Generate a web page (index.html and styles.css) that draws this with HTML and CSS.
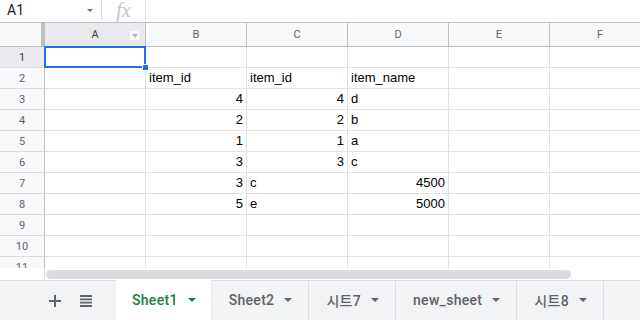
FILE: index.html
```html
<!DOCTYPE html>
<html>
<head>
<meta charset="utf-8">
<link rel="stylesheet" href="styles.css">
</head>
<body>
<div class="app">
  <div class="formula-bar">
    <div class="namebox"><span class="ref">A1</span><span class="caret"></span></div>
    <div class="fx">fx</div>
    <div class="finput"></div>
  </div>
  <div class="sheet">
    <div class="grid">
      <div class="corner"></div>
      <div class="ch sel-h">A<span class="filter"></span></div>
      <div class="ch">B</div><div class="ch">C</div><div class="ch">D</div><div class="ch">E</div><div class="ch">F</div>

      <div class="rh sel-h">1</div><div class="c"></div><div class="c"></div><div class="c"></div><div class="c"></div><div class="c"></div><div class="c"></div>
      <div class="rh">2</div><div class="c"></div><div class="c">item_id</div><div class="c">item_id</div><div class="c">item_name</div><div class="c"></div><div class="c"></div>
      <div class="rh">3</div><div class="c"></div><div class="c n">4</div><div class="c n">4</div><div class="c">d</div><div class="c"></div><div class="c"></div>
      <div class="rh">4</div><div class="c"></div><div class="c n">2</div><div class="c n">2</div><div class="c">b</div><div class="c"></div><div class="c"></div>
      <div class="rh">5</div><div class="c"></div><div class="c n">1</div><div class="c n">1</div><div class="c">a</div><div class="c"></div><div class="c"></div>
      <div class="rh">6</div><div class="c"></div><div class="c n">3</div><div class="c n">3</div><div class="c">c</div><div class="c"></div><div class="c"></div>
      <div class="rh">7</div><div class="c"></div><div class="c n">3</div><div class="c">c</div><div class="c n">4500</div><div class="c"></div><div class="c"></div>
      <div class="rh">8</div><div class="c"></div><div class="c n">5</div><div class="c">e</div><div class="c n">5000</div><div class="c"></div><div class="c"></div>
      <div class="rh">9</div><div class="c"></div><div class="c"></div><div class="c"></div><div class="c"></div><div class="c"></div><div class="c"></div>
      <div class="rh">10</div><div class="c"></div><div class="c"></div><div class="c"></div><div class="c"></div><div class="c"></div><div class="c"></div>
      <div class="rh">11</div><div class="c"></div><div class="c"></div><div class="c"></div><div class="c"></div><div class="c"></div><div class="c"></div>
    </div>
    <div class="selection"><span class="handle"></span></div>
  </div>
  <div class="hscroll">
    <div class="hs-corner"></div>
    <div class="track"><div class="thumb"></div></div>
  </div>
  <div class="tabbar">
    <div class="tools">
      <svg class="icon" width="14" height="14" viewBox="0 0 14 14"><path d="M7 1v12M1 7h12" stroke="#5f6368" stroke-width="2"/></svg>
      <svg class="icon" width="14" height="14" viewBox="0 0 14 14"><path d="M1 2h12M1 5.3h12M1 8.6h12M1 12h12" stroke="#5f6368" stroke-width="1.8"/></svg>
    </div>
    <div class="tab active"><span>Sheet1</span><span class="tcaret"></span></div>
    <div class="tab"><span>Sheet2</span><span class="tcaret"></span></div>
    <div class="tab"><span>시트7</span><span class="tcaret"></span></div>
    <div class="tab"><span>new_sheet</span><span class="tcaret"></span></div>
    <div class="tab"><span>시트8</span><span class="tcaret"></span></div>
  </div>
</div>
</body>
</html>
```
FILE: styles.css
```css
* { box-sizing: border-box; }
html, body { margin: 0; padding: 0; }
body {
  width: 640px;
  height: 320px;
  overflow: hidden;
  background: #fff;
  font-family: "Liberation Sans", Arial, sans-serif;
}
.app { width: 640px; height: 320px; display: flex; flex-direction: column; overflow: hidden; }

.formula-bar { height: 22px; display: flex; align-items: stretch; flex: none; }
.namebox {
  width: 102px;
  display: flex; align-items: center; justify-content: space-between;
  padding: 0 8px 0 7px;
  border-right: 1px solid #e0e0e0;
  margin: 0 0 2px;
}
.ref { font-family: Roboto, "Liberation Sans", sans-serif; font-size: 14px; color: #202124; }
.caret { width: 0; height: 0; border-left: 3.5px solid transparent; border-right: 3.5px solid transparent; border-top: 3.5px solid #757575; }
.fx {
  width: 44px;
  border-right: 1px solid #e0e0e0;
  margin: 0 0 2px;
  display: flex; align-items: center; justify-content: center;
  font-family: "Liberation Serif", serif; font-style: italic;
  font-size: 20px; color: #c4c7ca; line-height: 20px;
}
.finput { flex: 1; }

.sheet { position: relative; height: 246px; overflow: hidden; flex: none; }
.grid {
  display: grid;
  grid-template-columns: 45px repeat(6, 101px);
  grid-template-rows: 25px;
  grid-auto-rows: 21px;
  width: 651px;
}
.corner {
  background: #f8f9fa;
  border-top: 1px solid #c0c0c0;
  border-bottom: 1px solid #c0c0c0;
  border-right: 4px solid #bfbfbf;
}
.ch {
  position: relative;
  background: #f8f9fa;
  border-top: 1px solid #c0c0c0;
  border-bottom: 1px solid #c0c0c0;
  border-right: 1px solid #c0c0c0;
  display: flex; align-items: center; justify-content: center;
  font-family: Roboto, "Liberation Sans", sans-serif;
  font-size: 11px; color: #5f6368;
}
.ch.sel-h { background: #e8eaed; color: #3c4043; }
.filter {
  position: absolute; right: 5px; top: 7px;
  width: 11px; height: 11px;
  background: #f8f9fa;
  border: 1px solid #e8eaed;
}
.filter::after {
  content: ""; position: absolute; left: 1.5px; top: 3px;
  border-left: 3.5px solid transparent; border-right: 3.5px solid transparent; border-top: 4px solid #b0b4b8;
}
.rh {
  background: #f8f9fa;
  border-right: 1px solid #c0c0c0;
  border-bottom: 1px solid #dadce0;
  display: flex; align-items: center; justify-content: center;
  font-family: Roboto, "Liberation Sans", sans-serif;
  font-size: 11px; color: #5f6368;
}
.rh.sel-h { background: #e8eaed; color: #3c4043; }
.c {
  border-right: 1px solid #e2e2e2;
  border-bottom: 1px solid #e2e2e2;
  font-size: 13px; color: #000;
  padding: 0 3px 2px;
  display: flex; align-items: flex-end;
  line-height: 16px;
  white-space: nowrap; overflow: hidden;
}
.c.n { justify-content: flex-end; }

.selection {
  position: absolute; left: 44px; top: 24px;
  width: 102px; height: 22px;
  border: 2px solid #1a73e8;
}
.handle {
  position: absolute; right: -5px; bottom: -5px;
  width: 7px; height: 7px;
  background: #1a73e8; border: 1px solid #fff;
}

.hscroll { height: 12px; display: flex; flex: none; }
.hs-corner { width: 45px; border-right: 1px solid #e2e2e2; background: #fff; }
.track { flex: 1; padding: 2px 0 1px 1px; }
.thumb { width: 525px; height: 9px; background: #dadce0; border-radius: 5px; }

.tabbar {
  flex: 1;
  background: #f1f3f4;
  border-top: 1px solid #dadce0;
  display: flex; align-items: stretch;
}
.tools { width: 116px; flex: none; display: flex; align-items: center; gap: 17px; padding-left: 48px; }
.icon { display: block; }
.tab {
  flex: none;
  display: flex; align-items: center; gap: 10px;
  padding: 0 16px 0 17px;
  border-right: 1px solid #dadce0;
  font-family: Roboto, "Noto Sans CJK KR", "Liberation Sans", sans-serif;
  font-size: 14px; font-weight: 500; color: #5f6368;
  letter-spacing: 0.3px;
  margin-top: -1px;
}
.tab.active { background: #fff; color: #188038; border-right: 1px solid #e8eaed; padding: 0 15px 0 16px; }
.tcaret { width: 0; height: 0; border-left: 4px solid transparent; border-right: 4px solid transparent; border-top: 4px solid #5f6368; }
.tab.active .tcaret { border-top-color: #188038; }
```
